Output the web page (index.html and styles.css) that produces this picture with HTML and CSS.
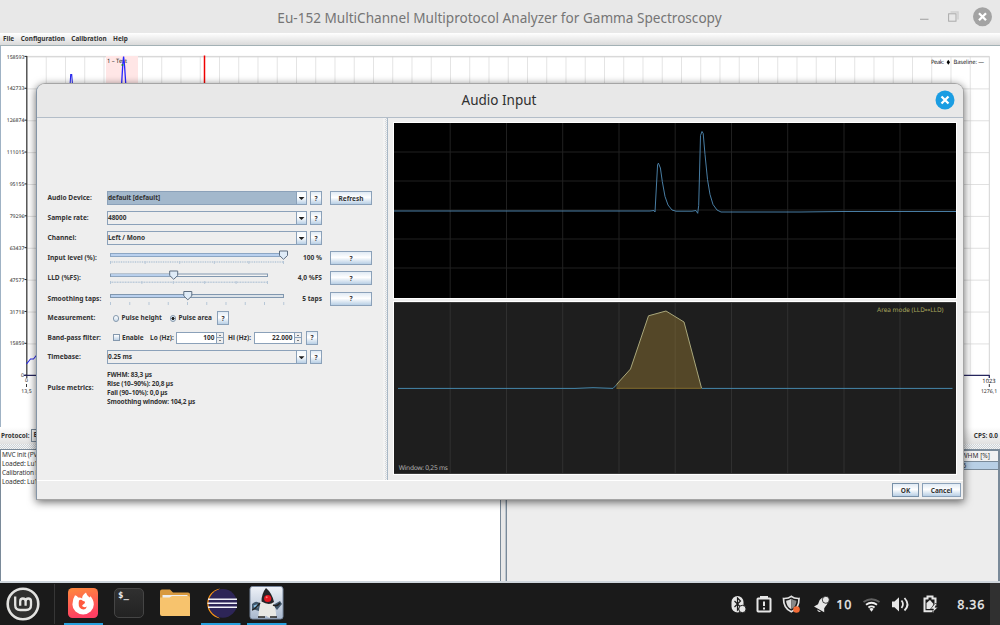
FILE: index.html
```html
<!DOCTYPE html>
<html lang="en">
<head>
<meta charset="utf-8">
<title>Eu-152 MultiChannel Multiprotocol Analyzer</title>
<link rel="stylesheet" href="styles.css">
</head>
<body>
<div class="desktop">
  <main class="app">
    <header class="app-title">
      <h1>Eu-152 MultiChannel Multiprotocol Analyzer for Gamma Spectroscopy</h1>
      <svg class="app-controls" width="80" height="33" viewBox="0 0 80 33">
        <path d="M0 19.3h8.5" stroke="#aaa" stroke-width="1.2"/>
        <path d="M30.5 12h7.5v7.500" fill="none" stroke="#d0d0d0" stroke-width="1.6"/>
        <rect x="28.600" y="13.800" width="7.400" height="7.400" fill="#e8e8e8" stroke="#aaa"/>
        <circle cx="62.500" cy="16.700" r="9.500" fill="#a3a3a3"/>
        <path d="M59 13.200l7 7m0-7l-7 7" stroke="#fff" stroke-width="2.300"/>
      </svg>
    </header>
    <nav class="menu"><span>File</span><span>Configuration</span><span>Calibration</span><span>Help</span></nav>
    <section class="spectrum">
      <svg width="1000" height="381" viewBox="0 46 1000 381">
        <defs>
          <pattern id="grid" x="26.500" y="56.500" width="19.250" height="31.880" patternUnits="userSpaceOnUse">
            <path d="M0 0H19.250M0 0V31.880" fill="none" stroke="#d6d6d6" stroke-width="1.300"/>
          </pattern>
        </defs>
        <path d="M0.500 46V427" stroke="#9fb2c4"/>
        <rect x="26.500" y="56" width="963" height="319.500" fill="url(#grid)"/>
        <path d="M26.500 56.400H989.300V375" fill="none" stroke="#d6d6d6"/>
        <rect x="106" y="56" width="32" height="319" fill="#ffe6e6"/>
        <g class="axis-text" text-anchor="end">
          <text x="24.500" y="58.500">158593</text><text x="24.500" y="90.400">142733</text>
          <text x="24.500" y="122.200">126874</text><text x="24.500" y="154">111015</text>
          <text x="24.500" y="186">95155</text><text x="24.500" y="218">79296</text>
          <text x="24.500" y="249.800">63437</text><text x="24.500" y="281.700">47577</text>
          <text x="24.500" y="313.500">31718</text><text x="24.500" y="345.400">15859</text>
          <text x="24" y="377.300">0</text>
        </g>
        <path d="M24.500 56.400h2.500m-2.500 31.880h2.500m-2.500 31.880h2.500m-2.500 31.880h2.500m-2.500 31.880h2.500m-2.500 31.880h2.500m-2.500 31.880h2.500m-2.500 31.880h2.500m-2.500 31.880h2.500m-2.500 31.880h2.500m-2.500 31.880h2.500" stroke="#222" fill="none"/>
        <path d="M26.800 56V378" stroke="#333" stroke-width="1.200"/>
        <path d="M24 375.300H989.500M989.300 375v3" stroke="#26265e" stroke-width="1.300" fill="none"/>
        <path d="M26.500 364l4-5h3l4-5M70 86l.7-11.500h1l.9 11.500" fill="none" stroke="#2626ee" stroke-width="1.100"/>
        <text class="peak-label" x="107" y="62.500" textLength="20">1 – Test</text>
        <path d="M121.500 86l1.300-22 .8-7.500 1 10 1.300 19.500" fill="none" stroke="#2626ff" stroke-width="1.300"/>
        <circle cx="122.400" cy="65" r="1" fill="#168a45"/>
        <path d="M204.500 55.500V90" stroke="#f00000" stroke-width="1.500"/>
        <g class="legend-text"><text x="931" y="64" textLength="13">Peak:</text><text x="953.500" y="64" textLength="30.500">Baseline: —</text></g>
        <path d="M948.300 59.700l1.700 2.500-1.700 2.500-1.700-2.500z"/>
        <g class="axis-text" text-anchor="middle"><text x="26.500" y="382">0</text><text x="26.500" y="393">13,5</text><text class="axis-big" x="989" y="382.500">1023</text><text x="989" y="393">1276,1</text></g>
        <path d="M26.500 384v3M989.300 384v3" stroke="#333"/>
      </svg>
    </section>
    <div class="protocol"><b>Protocol:</b><span class="protocol-pick">E</span><b class="cps">CPS: 0.0</b></div>
    <div class="split-h"></div>
    <section class="lower">
      <div class="log"><p>MVC init (PV</p><p>Loaded: Lu1</p><p>Calibration l</p><p>Loaded: Lu1</p></div>
      <div class="split-v"></div>
      <div class="peaks"><div class="peaks-head">FWHM [%]</div><div class="peaks-row"><span>5</span></div></div>
    </section>
  </main>

  <section class="dialog">
    <header class="dialog-title"><h2>Audio Input</h2>
      <svg class="dialog-close" width="20" height="20" viewBox="0 0 20 20"><circle cx="10" cy="10" r="9.500" fill="#1b9de2"/><path d="M6.500 6.500l7 7m0-7l-7 7" stroke="#fff" stroke-width="2.300"/></svg>
    </header>
    <div class="dialog-body">
      <div class="form">
        <div class="row"><label>Audio Device:</label><div class="combo selected"><span>default [default]</span><i></i></div><button class="help">?</button><button class="wide">Refresh</button></div>
        <div class="row"><label>Sample rate:</label><div class="combo"><span>48000</span><i></i></div><button class="help">?</button></div>
        <div class="row"><label>Channel:</label><div class="combo"><span>Left / Mono</span><i></i></div><button class="help">?</button></div>
        <div class="row"><label>Input level (%):</label>
          <svg class="slider" width="182" height="18" viewBox="0 0 182 18"><rect x="3.500" y="4.500" width="173" height="3" fill="#b9d0ee" stroke="#8ca6c4"/><path d="M3.500 13H177" stroke="#b7c7d7" stroke-width="1.500" stroke-dasharray="1 .75"/><path d="M3.500 12v3m34.600-3v3m34.600-3v3m34.600-3v3m34.600-3v3m34.600-3v3" stroke="#b7c7d7"/><path d="M172.500 2h8v4.500l-4 3.800-4-3.800z" fill="#dfebf7" stroke="#5f6f82"/></svg>
          <span class="value">100 %</span><button class="wide">?</button></div>
        <div class="row"><label>LLD (%FS):</label>
          <svg class="slider" width="182" height="18" viewBox="0 0 182 18"><rect x="3.500" y="5" width="157" height="2.500" fill="#f2f2f2" stroke="#8197af"/><path d="M4 6.300H67" stroke="#b9d0ee" stroke-width="2"/><path d="M3.500 13.200H161" stroke="#b7c7d7" stroke-width="1.500" stroke-dasharray="1 .6"/><path d="M3.500 12v3m31.400-3v3m31.400-3v3m31.400-3v3m31.400-3v3m31.400-3v3" stroke="#b7c7d7"/><path d="M62.700 2h8v4.500l-4 3.800-4-3.800z" fill="#dfebf7" stroke="#5f6f82"/></svg>
          <span class="value">4,0 %FS</span><button class="wide">?</button></div>
        <div class="row"><label>Smoothing taps:</label>
          <svg class="slider" width="182" height="18" viewBox="0 0 182 18"><rect x="3.500" y="4.500" width="173" height="3" fill="#dce3e9" stroke="#8197af"/><path d="M4 6H81" stroke="#b9d0ee" stroke-width="2"/><path d="M3.500 12v3m19.250-3v3m19.250-3v3m19.250-3v3m19.250-3v3m19.250-3v3m19.250-3v3m19.250-3v3m19.250-3v3m19.250-3v3" stroke="#b7c7d7"/><path d="M76.800 1.500h8v4.500l-4 3.800-4-3.800z" fill="#dfebf7" stroke="#5f6f82"/></svg>
          <span class="value">5 taps</span><button class="wide">?</button></div>
        <div class="row measure"><label>Measurement:</label><span class="radio"></span><span class="r1">Pulse height</span><span class="radio on"></span><span class="r2">Pulse area</span><button class="help">?</button></div>
        <div class="row band"><label>Band-pass filter:</label><span class="check"></span><span class="enable">Enable</span><span class="lo">Lo (Hz):</span><div class="spin"><span>100</span><i></i></div><span class="hi">Hi (Hz):</span><div class="spin"><span>22.000</span><i></i></div><button class="help">?</button></div>
        <div class="row"><label>Timebase:</label><div class="combo"><span>0.25 ms</span><i></i></div><button class="help">?</button></div>
        <div class="row metrics"><label>Pulse metrics:</label><div><p>FWHM: 83,3 µs</p><p>Rise (10–90%): 20,8 µs</p><p>Fall (90–10%): 0,0 µs</p><p>Smoothing window: 104,2 µs</p></div></div>
      </div>
      <div class="dialog-split"></div>
      <div class="scopes">
        <svg class="scope live" width="562" height="175" viewBox="394 123.500 562 175">
          <rect x="394" y="123" width="562" height="176" fill="#000"/>
          <path d="M450.200 123V299M506.500 123V299M562.700 123V299M619 123V299M675.200 123V299M731.500 123V299M787.700 123V299M844 123V299M900 123V299M394 152.500H956M394 181.500H956M394 210.500H956M394 239.500H956M394 268.500H956" stroke="#202020" fill="none"/>
          <path d="M394 211.500H650L654 211 655 212.500 657.600 165 658.400 163.700 660.400 168.500 662.300 182 665 197 668 205.500 672 210.500 676 211.700H692L696 211 697.700 213.800 698.700 206 700.500 136 702 132 703.200 134 705 155 707.500 180 710 195 713 205 717 210.500 721 212.500H800L842 212H956" fill="none" stroke="#508bb5" stroke-width=".9"/>
        </svg>
        <svg class="scope window" width="562" height="172" viewBox="394 302 562 172">
          <rect x="394" y="302" width="562" height="172" fill="#1e1e1e"/>
          <path d="M450.200 302V474M506.500 302V474M562.700 302V474M619 302V474M675.200 302V474M731.500 302V474M787.700 302V474M844 302V474M900 302V474" stroke="#303030" fill="none"/>
          <path d="M394 302.500H956M394 473.500H956" stroke="#3b3b3b"/>
          <path d="M398 388.400H575l18-.7 20 .7 4-4M701.500 388.400H952.500" fill="none" stroke="#4688ac"/>
          <path d="M616.500 388.500V384.500L630.500 369 648.500 315.800 666 311 684 322 701.500 388.500z" fill="#9f8138" fill-opacity=".42"/>
          <path d="M616.500 388.300H701.500" stroke="#806b2d"/>
          <path d="M616.500 384.500L630.500 369 648.500 315.800 666 311 684 322 701.500 388" fill="none" stroke="#a9a77b"/>
          <text x="943.500" y="311.500" class="mode-text" text-anchor="end">Area mode (LLD↔LLD)</text>
          <text x="398.700" y="469.500" class="window-text" textLength="49.300">Window: 0,25 ms</text>
        </svg>
      </div>
    </div>
    <footer class="dialog-actions"><button class="ok">OK</button><button>Cancel</button></footer>
  </section>

  <footer class="taskbar">
    <svg width="1000" height="42" viewBox="0 583 1000 42">
      <circle cx="23" cy="604" r="15.300" fill="#30302f" stroke="#e2e2e0" stroke-width="2.600"/>
      <path d="M15.200 596.500v8.500q0 5 5 5h5.800q5 0 5-5v-3.500q0-3-2.700-3t-2.700 3v4.300M25.600 605.800v-4.300q0-3-2.700-3t-2.700 3v4.300" fill="none" stroke="#e5e5e3" stroke-width="2.300"/>
      <path d="M54.500 584V624" stroke="#363636"/>
      <defs>
        <linearGradient id="fox" x2=".2" y2="1"><stop stop-color="#ff8a3c"/><stop offset="1" stop-color="#ff3f63"/></linearGradient>
        <linearGradient id="term" x2="0" y2="1"><stop stop-color="#303030"/><stop offset="1" stop-color="#222"/></linearGradient>
        <linearGradient id="duke" x2="0" y2="1"><stop stop-color="#eef2f8"/><stop offset="1" stop-color="#a8b8ce"/></linearGradient>
      </defs>
      <rect x="68" y="588" width="30" height="30" rx="4.500" fill="url(#fox)"/>
      <path d="M75 595.300q2 .5 3.200 2.300 2.200-.3 4 .8-.5-3 3.800-6 .7 3.200 3.500 5.200l1-1.300q3.500 4 3.300 8.300a10.700 9.800 0 0 1-21.400 0q0-5.500 2.600-9.300z" fill="#fff"/>
      <path d="M79 600.500q2-1.500 4 .5 3 .2 1.500 2.500-2 1-2.500 2.500 2 2 5 .5-1.500 4-5.500 2.500-4-2-2.500-8.500z" fill="#ff593f"/>
      <rect x="114.500" y="588.500" width="29" height="29" rx="4.500" fill="url(#term)" stroke="#454545"/>
      <text x="118" y="598" class="prompt">$_</text>
      <path d="M160 591.500q0-2 2-2h8l3 3h15q2 0 2 2v9h-30z" fill="#d8993e"/><path d="M162.500 595h25v5h-25z" fill="#eee"/>
      <path d="M160 597.500h9.500l2.500-1.500h16q2 0 2 2v18h-28q-2 0-2-2z" fill="#f7c36d"/>
      <path d="M220 588.400a15.200 15.200 0 0 0 0 30 18 18 0 0 1 0-30z" fill="#f99416"/>
      <circle cx="222.800" cy="603.400" r="14.300" fill="#2d2557"/>
      <path d="M208 599.300h29m-29.500 4h29.500m-29 4h29" stroke="#f1f1f8" stroke-width="1.600"/>
      <rect x="250" y="586.500" width="33" height="32.500" rx="2.500" fill="url(#duke)" stroke="#77869c"/>
      <path d="M252 604q5-5 9 1l-2 6-7-2zM273 605l7-4 2 3-5 6z" fill="#41576b"/><path d="M253.500 605.500l4-1.200.8 3-4 .5z" fill="#87bfe5"/>
      <path d="M261 600q-2 8-2.700 16.500 4 2.700 7.700-.7 5 4 10.300 1-.5-10-4.300-18z" fill="#e8e8e4"/>
      <path d="M266 588q6 5 8 14-5 4-12.500-.5 0-8 4.500-13.500z" fill="#252528"/><circle cx="267.700" cy="598.500" r="3.600" fill="#e41720"/><circle cx="266.700" cy="597.300" r="1" fill="#ff7a70"/>
      <path d="M260 603q-6 7-8 7m21-5q4 2 7-2M258 617h7m5 0h7" fill="none" stroke="#222" stroke-width="1.500"/>
      <path d="M64 624.200H103M201 624.200H240.500M247 624.200H286.500" stroke="#26a0dd" stroke-width="2.500"/>
      <rect x="731.500" y="596" width="12" height="16.500" rx="6" fill="#e6e6e6"/><path d="M734.500 601l6 6-3 3v-12l3 3-6 6" fill="none" stroke="#1a1a1a" stroke-width="1.200"/><circle cx="742.400" cy="609" r="3.700" fill="#e6e6e6" stroke="#1a1a1a"/>
      <rect x="757.500" y="598.500" width="13" height="13" rx=".7" fill="none" stroke="#e6e6e6" stroke-width="2"/><path d="M760 596h8v3h-8z" fill="#e6e6e6"/><path d="M764 601.500v4.500m0 1.500v2" stroke="#e6e6e6" stroke-width="2"/>
      <path d="M783.500 598.500q5 .2 7.800-2.200 2.800 2.400 7.700 2.200.2 10-7.700 13.300-7.900-3.300-7.800-13.300z" fill="#1a1a1a" stroke="#e2e2e2" stroke-width="1.700"/><path d="M791.300 598.800v10.400q-5-2.800-5.200-8.500 3.200-.2 5.200-1.900z" fill="#ddd"/><path d="M791.300 598.800v10.400q5-2.800 5.200-8.500-3.200-.2-5.200-1.900z" fill="#888"/><circle cx="796.500" cy="609.500" r="3.300" fill="#f36b36"/>
      <path d="M814 606.500l4-2.300 1.700-4.300q2-3 5.700-2.700l1.800 3.500q1 3-1.300 5l-1.700 2.600v4zM817 609.500l4 2q-3 1.500-4-2z" fill="#e6e6e6"/><circle cx="825.800" cy="599.800" r="3.500" fill="#e6e6e6" stroke="#1a1a1a" stroke-width=".8"/>
      <text class="tray-text" x="836.300" y="609" textLength="15">10</text>
      <g fill="none" stroke-width="1.900"><path d="M863.500 602q8-5.500 16 0" stroke="#626262"/><path d="M866 604.800q5.500-4 11 0m-8.600 2.700q3-2.300 6.200 0" stroke="#eee"/></g><path d="M869.300 608.800q2.200-1.400 4.400 0l-2.200 3z" fill="#eee"/>
      <path d="M892 601.500h2.500l4.500-4.300v14.400l-4.500-4.300H892z" fill="#e6e6e6"/><path d="M901.500 600.500q3 3.700 0 7.500M904.500 598q6 6.500 0 12.500" fill="none" stroke="#e6e6e6" stroke-width="1.800"/>
      <path d="M934 611.200h-9.500v-12.700h3v-2h5v2h3v7" fill="none" stroke="#e6e6e6" stroke-width="2"/><path d="M926.500 609v-6l3.500-3 3.500 4-2 5z" fill="#e6e6e6"/><path d="M935 603.500l-4.500 5.500h3l-1.500 4 6-5.700h-3l2-3.800z" fill="#e6e6e6" stroke="#1a1a1a" stroke-width=".6"/>
      <text class="tray-text" x="957.300" y="609" textLength="27">8.36</text><rect x="990" y="583" width="10" height="42" fill="#303030"/>
    </svg>
  </footer>
</div>
</body>
</html>
```
FILE: styles.css
```css
* { box-sizing: border-box; }
body { margin: 0; font-family: "Noto Sans", "Open Sans", sans-serif; font-size: 6.6px; color: #333; }
h1, h2, p { margin: 0; font-weight: 400; }
svg { display: block; flex: none; }
svg text { text-rendering: geometricPrecision; }
i { display: block; }
.desktop { position: relative; width: 1000px; height: 625px; overflow: hidden; background: #ededed; }
.app { display: flex; flex-direction: column; height: 583px; }
.app-title { position: relative; display: flex; justify-content: center; height: 33px; flex: none; padding-right: 1px; background: #e8e8e8; }
.app-title h1 { font-size: 13.58px; line-height: 35px; height: 33px; color: #757575; white-space: nowrap; }
.app-controls { position: absolute; right: 0; top: 0; }
.menu { display: flex; gap: 6.5px; height: 13px; flex: none; padding-left: 3px; font-size: 6.4px; font-weight: 700; line-height: 12px; background: linear-gradient(#fff, #dadada); border-bottom: 1px solid #a3b1b5; }
.spectrum { height: 381px; flex: none; background: #fff; }
.axis-text { font-size: 5.2px; fill: #222; }
.axis-big { font-size: 5.8px; }
.peak-label, .legend-text { font-size: 5.8px; fill: #222; }
.protocol { display: flex; align-items: center; height: 17px; flex: none; padding: 0 2px 0 1px; font-size: 6.4px; background: linear-gradient(#fff, #e1e1e1); }
.protocol-pick { width: 90px; height: 13px; margin-left: 2px; padding-left: 1px; line-height: 10px; font-weight: 700; border: 1px solid #7a8a99; }
.cps { margin-left: auto; }
.split-h { height: 5px; flex: none; background: repeating-conic-gradient(#cdd3d8 0 25%, #f5f5f5 0 50%) 0 0 / 2px 2px; }
.lower { display: flex; flex: 1; border-top: 1px solid #7a8a99; border-bottom: 2px solid #cfd6dc; }
.log { width: 501px; padding: 1px 0 0 1px; background: #fff; border: solid #7a8a99; border-width: 0 1px 0 1px; font-size: 6.5px; line-height: 8.9px; letter-spacing: -.12px; }
.split-v { width: 5px; background: #e8e8e8; border-right: 1px solid #bcc5cd; }
.peaks { flex: 1; border: 1px solid #7a8a99; border-width: 1px 2px 0 1px; background: #ededed; }
.peaks-head { height: 11px; line-height: 10px; padding-right: 8px; text-align: right; background: #f2f2f2; border-bottom: 1px solid #7a8a99; }
.peaks-row { height: 8px; line-height: 7px; padding-left: 455.5px; background: #b8cfe5; border-bottom: 1px solid #7a8a99; }
.dialog { position: absolute; left: 36px; top: 83px; width: 928px; height: 417px; display: flex; flex-direction: column; background: #eee; border: 1px solid #a5a5a5; border-left-color: #8495a7; border-radius: 9px 9px 0 0; box-shadow: 0 2px 9px rgba(0,0,0,.6); }
.dialog-title { position: relative; height: 34px; flex: none; border-bottom: 1px solid #b3bdc8; background: #e8e8e8; border-radius: 8px 8px 0 0; }
.dialog-title h2 { padding-right: 2px; text-align: center; font-size: 13.5px; line-height: 33px; height: 33px; color: #303030; }
.dialog-close { position: absolute; right: 8px; top: 6px; }
.dialog-body { display: flex; height: 363px; flex: none; border-bottom: 1px solid #fff; }
.form { width: 346px; flex: none; padding: 70px 0 0 10px; font-weight: 700; white-space: nowrap; }
.row { display: flex; align-items: center; height: 20px; line-height: 12px; }
.row label { width: 60px; flex: none; padding-left: .5px; }
.row:nth-child(5) { height: 20.5px; }
.row:nth-child(n+7) { height: 19.5px; }
.combo { display: flex; width: 200px; height: 14px; border: 1px solid #8ba1b9; line-height: 11px; }
.combo span { flex: 1; font-size: 6.5px; letter-spacing: -.04px; }
.combo.selected span { background: #a3b8cc; }
.combo i { width: 10px; border-left: 1px solid #8ba1b9; background: linear-gradient(#f4f8fb, #fff 45%, #b8cfe5); }
.combo i::before { content: ""; display: block; width: 6px; height: 3px; margin: 5px 0 0 1.5px; background: #222; clip-path: polygon(0 0, 100% 0, 50% 100%); }
button { height: 14px; padding: 0; border: 1px solid #8ba1b9; background: linear-gradient(#e0eaf4, #fff 45%, #b8cfe5); color: #333; font: 700 6.5px/11px "Noto Sans", "Open Sans", sans-serif; }
.help { width: 12px; margin-left: 3px; }
.wide { width: 42px; margin-left: 8px; }
.value { width: 33px; text-align: right; }
.measure, .band { font-size: 6.5px; }
.radio { width: 6.500px; height: 6.500px; flex: none; border: 1px solid #8498ad; border-radius: 50%; margin: 0 2.500px 0 5.500px; background: linear-gradient(#fff, #cbdcec); }
.radio.on { margin-left: 8px; background: radial-gradient(circle, #222 45%, #dce7f1 50%); }
.r1 { width: 40px; }
.r2 { width: 33px; }
.measure label, .band label { font-size: 6.6px; }
.measure .help { margin-left: 5.500px; }
.check { width: 7px; height: 7px; margin: 0 2px 0 6px; border: 1px solid #8498ad; background: linear-gradient(#fff, #bed2e6); }
.enable { width: 28px; }
.lo { width: 26px; }
.hi { width: 26px; margin-left: 4px; }
.spin { display: flex; width: 48px; height: 12px; border: 1px solid #8ba1b9; background: #fff; line-height: 10px; text-align: right; }
.spin span { flex: 1; padding-right: 1px; }
.spin i { width: 7.500px; border-left: 1px solid #8ba1b9; background: linear-gradient(#eee 45%, #8ba1b9 45% 55%, #eee 55%); }
.spin i::before, .spin i::after { content: ""; display: block; margin: 2px auto 0; width: 2px; height: 1px; background: #777; }
.spin i::after { margin-top: 4px; }
.band .help { margin-left: 4px; }
.row.metrics { height: 42px; line-height: 8.85px; }
.metrics p { font-size: 6.5px; font-weight: 700; letter-spacing: -.14px; }
.metrics div { padding-top: 1.500px; }
.dialog-split { width: 5px; flex: none; background: linear-gradient(90deg, #f3f3f3 2px, transparent 2px), repeating-conic-gradient(#d3d8dd 0 25%, #f5f5f5 0 50%) 0 0 / 2px 2px; border-right: 1px solid #a9b8c6; }
.scopes { display: flex; flex-direction: column; gap: 4px; padding: 5px 0 0 6px; }
.scope { box-shadow: 0 0 0 1px #fff; }
.mode-text { font-family: "Noto Sans", "DejaVu Sans", sans-serif; font-size: 6.400px; fill: #a9a85e; }
.window-text { font-size: 6.600px; fill: #b0b0b0; }
.dialog-actions { display: flex; justify-content: flex-end; gap: 3px; padding: 2px 2px 0 0; }
.dialog-actions button { width: 39px; }
.dialog-actions .ok { width: 27px; border: 1.5px solid #7890a8; }
.taskbar { height: 42px; background: #1a1a1a; }
.prompt { font: 700 9px "DejaVu Sans Mono", monospace; fill: #eee; }
.tray-text { font-size: 12.500px; font-weight: 500; fill: #e8e8e8; stroke: #e8e8e8; stroke-width: .2px; }
```
